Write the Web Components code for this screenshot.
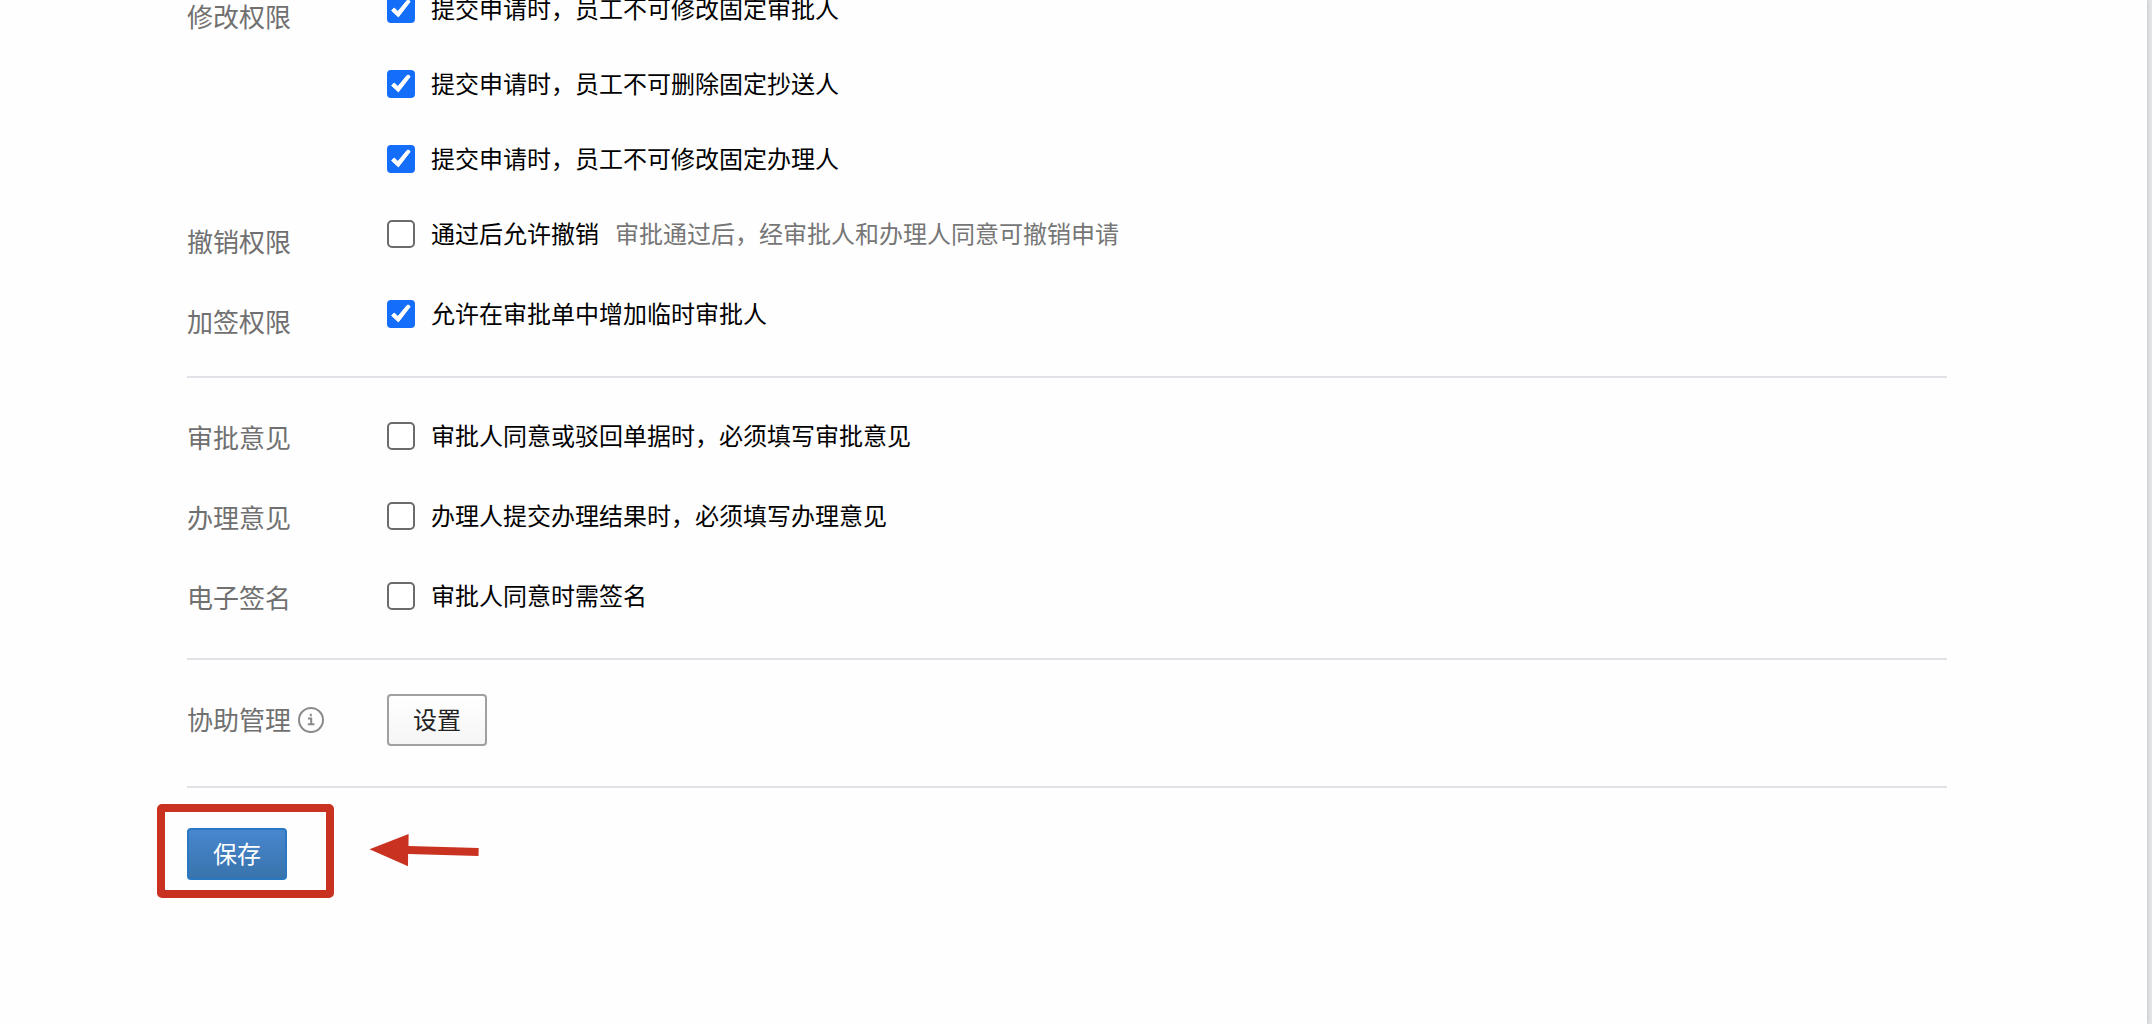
<!DOCTYPE html>
<html lang="zh-CN">
<head>
<meta charset="utf-8">
<meta name="viewport" content="width=device-width, initial-scale=1">
<title>审批设置</title>
<style>
  html, body { height: 100%; }
  body { margin: 0; overflow: hidden; background: #e4e5e7; font-family: "Noto Sans CJK SC", sans-serif; font-size: 24px; line-height: 34px; color: #000; }
</style>
</head>
<body>
<settings-page>
  <settings-section class="first">
    <settings-row label="修改权限" class="group">
      <check-option checked>提交申请时，员工不可修改固定审批人</check-option>
      <check-option checked>提交申请时，员工不可删除固定抄送人</check-option>
      <check-option checked>提交申请时，员工不可修改固定办理人</check-option>
    </settings-row>
    <settings-row label="撤销权限">
      <check-option>通过后允许撤销<span slot="hint">审批通过后，经审批人和办理人同意可撤销申请</span></check-option>
    </settings-row>
    <settings-row label="加签权限">
      <check-option checked>允许在审批单中增加临时审批人</check-option>
    </settings-row>
  </settings-section>
  <settings-section class="opinions">
    <settings-row label="审批意见"><check-option>审批人同意或驳回单据时，必须填写审批意见</check-option></settings-row>
    <settings-row label="办理意见"><check-option>办理人提交办理结果时，必须填写办理意见</check-option></settings-row>
    <settings-row label="电子签名"><check-option>审批人同意时需签名</check-option></settings-row>
  </settings-section>
  <settings-section class="assist">
    <settings-row label="协助管理">
      <info-icon slot="icon"></info-icon>
      <action-button>设置</action-button>
    </settings-row>
  </settings-section>
  <save-bar slot="footer"></save-bar>
</settings-page>

<script>
const define = (name, html, setup) => {
  const template = document.createElement('template');
  template.innerHTML = html;
  customElements.define(name, class extends HTMLElement {
    constructor() {
      super();
      this.attachShadow({ mode: 'open' }).append(template.content.cloneNode(true));
    }
    connectedCallback() { if (setup) setup(this, this.shadowRoot); }
  });
};

define('settings-page', `
  <style>
    :host { display: block; height: 100%; }
    main { box-sizing: border-box; height: 100%; margin-right: 5px; padding: 0 200px 0 187px; overflow: hidden; background: #fefefe; box-shadow: 0 0 4px rgba(0,0,0,.2); }
  </style>
  <main><slot></slot><slot name="footer"></slot></main>`);

define('settings-section', `
  <style>
    :host { display: flex; flex-direction: column; gap: 36px; padding: 40px 0 36px; border-bottom: 2px solid #e1e2e7; --label-top: 2px; --row-height: 44px; }
    /* The list is scrolled slightly past its first line. */
    :host(.first) { padding-top: 0; margin-top: -9px; --label-top: 8px; }
    :host(.assist) { padding: 34px 0 40px; --label-top: 8px; --row-height: 52px; }
  </style>
  <slot></slot>`);

define('settings-row', `
  <style>
    :host { display: grid; grid-template-columns: 200px 1fr; min-height: var(--row-height); }
    :host(.group) { padding-bottom: 3px; }
    .label { display: flex; align-items: center; align-self: start; gap: 7px; padding-top: var(--label-top); font-size: 26px; color: #707070; }
    .label span { padding-bottom: 2px; }
    .content { display: flex; flex-direction: column; align-items: flex-start; gap: 39px; }
  </style>
  <div class="label"><span></span><slot name="icon"></slot></div>
  <div class="content"><slot></slot></div>`,
  (el, root) => { root.querySelector('span').textContent = el.getAttribute('label'); });

define('check-option', `
  <style>
    :host { display: flex; align-items: center; gap: 16px; }
    label { display: flex; align-items: center; gap: 16px; }
    .box { display: grid; width: 28px; height: 28px; }
    .text, ::slotted([slot=hint]) { padding-bottom: 2px; }
    input, svg { grid-area: 1 / 1; }
    input { appearance: none; box-sizing: border-box; width: 28px; height: 28px; margin: 0; border: 2px solid #6b6b6b; border-radius: 5px; background: #fff; }
    input:checked { border-color: #146ef9; border-radius: 4px; background: #146ef9; }
    svg { visibility: hidden; pointer-events: none; }
    input:checked + svg { visibility: visible; }
    ::slotted([slot=hint]) { color: #767676; }
  </style>
  <label><span class="box"><input type="checkbox"><svg width="28" height="28" viewBox="0 0 28 28" fill="#fff" stroke="#fff" stroke-width="1" stroke-linejoin="round"><path d="M4.6 15.6 L7.2 13 L10.9 16.5 L20.2 5.3 Q21.8 4.6 23.2 6.6 L11.4 21.9Z"/></svg></span><span class="text"><slot></slot></span></label>
  <slot name="hint"></slot>`,
  (el, root) => { root.querySelector('input').checked = el.hasAttribute('checked'); });

define('info-icon', `
  <style>:host { display: block; width: 26px; height: 26px; } svg { display: block; }</style>
  <svg width="26" height="26" viewBox="0 0 26 26" fill="none" stroke="#8a8a8a" role="img" aria-label="说明">
    <circle cx="13" cy="13" r="12" stroke-width="2"/>
    <path d="M12.8 6.8v2.4M10 11.4h3.2v5.6M9.8 17.2h6.6" stroke-width="2"/>
  </svg>`);

define('action-button', `
  <style>
    :host { display: block; }
    button { box-sizing: border-box; min-width: 100px; height: 52px; padding: 0 24px 2px; border: 2px solid #a0a0a0; border-radius: 4px; background: linear-gradient(#fff, #f5f5f5); color: #222; font: inherit; }
    :host([primary]) button { border-color: #2a78c4; background: linear-gradient(#4887cf, #3873ab); color: #fff; }
  </style>
  <button type="button"><slot></slot></button>`);

define('save-bar', `
  <style>
    :host { display: flex; padding-top: 40px; }
    .target { position: relative; }
    .frame { position: absolute; inset: -24px -47px -18px -30px; border: 8px solid #c93120; border-radius: 5px; pointer-events: none; }
    .arrow { position: absolute; left: 182px; top: 4px; pointer-events: none; }
  </style>
  <div class="target">
    <action-button primary>保存</action-button>
    <div class="frame"></div>
    <svg class="arrow" width="112" height="36" viewBox="0 0 112 36" fill="#c93120" aria-hidden="true"><path d="M.5 17.3 L39.6 2 L39.5 14 L109.7 16 L109.5 24 L39.1 22 L39 34.3Z"/></svg>
  </div>`);
</script>
</body>
</html>
